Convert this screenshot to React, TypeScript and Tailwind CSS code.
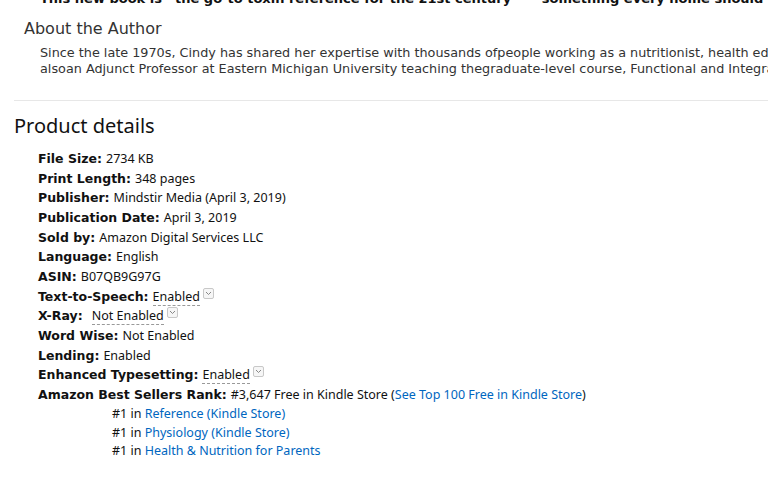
import React from "react";

const details: { label: string; value: string; dotted?: boolean; gap?: boolean }[] = [
  { label: "File Size:", value: "2734 KB" },
  { label: "Print Length:", value: "348 pages" },
  { label: "Publisher:", value: "Mindstir Media (April 3, 2019)" },
  { label: "Publication Date:", value: "April 3, 2019" },
  { label: "Sold by:", value: "Amazon Digital Services LLC" },
  { label: "Language:", value: "English" },
  { label: "ASIN:", value: "B07QB9G97G" },
  { label: "Text-to-Speech:", value: "Enabled", dotted: true },
  { label: "X-Ray:", value: "Not Enabled", dotted: true, gap: true },
  { label: "Word Wise:", value: "Not Enabled" },
  { label: "Lending:", value: "Enabled" },
  { label: "Enhanced Typesetting:", value: "Enabled", dotted: true },
];

const ranks = [
  "Reference (Kindle Store)",
  "Physiology (Kindle Store)",
  "Health & Nutrition for Parents",
];

const PopIcon = () => (
  <span className="ml-[3px] inline-flex h-[11px] w-[11px] -translate-y-[4px] items-center justify-center rounded-[2px] border border-[#c8c8c8] bg-[#f6f6f6] align-middle">
    <svg width="7" height="5" viewBox="0 0 7 5">
      <path d="M1 1 L3.5 3.5 L6 1" fill="none" stroke="#888" strokeWidth="1" />
    </svg>
  </span>
);

const App = () => {
  return (
    <div className="h-[479px] w-[768px] overflow-hidden bg-white">
      <div className="whitespace-nowrap font-['Verdana','DejaVu_Sans',sans-serif] text-[#333]">
        <p className="-mt-[10px] pl-[40px] text-[13px] font-bold leading-[18px] text-[#111]">
          This new book is “the go-to toxin reference for the 21st century” — something every home should have.
        </p>
        <h3 className="mt-[10px] pl-[24px] text-[16px] leading-[21px]">About the Author</h3>
        <div className="mt-[6px] pl-[40px] text-[12.8px] leading-[16px]">
          <p>
            Since the late 1970s, Cindy has shared her expertise with thousands ofpeople working as a nutritionist, health educator and author.
          </p>
          <p>
            alsoan Adjunct Professor at Eastern Michigan University teaching thegraduate-level course, Functional and Integrative Nutrition.
          </p>
        </div>
      </div>

      <hr className="ml-[14px] mt-[23px] border-t border-[#e7e7e7]" />

      <div className="font-['Noto_Sans','Open_Sans',sans-serif] text-[#111]">
        <h2 className="mt-[12px] pl-[14px] text-[20px] leading-[26px]">Product details</h2>
        <ul className="mt-[10px] pl-[38px] text-[12.5px] leading-[19.6px]">
          {details.map((d) => (
            <li key={d.label} className="h-[19.67px] whitespace-nowrap">
              <b className="font-['DejaVu_Sans',sans-serif] text-[12.5px] font-bold">{d.label}</b>
              <span className={d.gap ? "ml-[9px]" : "ml-[4px]"}>
                {d.dotted ? (
                  <span className="border-b border-dashed border-[#999]">{d.value}</span>
                ) : (
                  d.value
                )}
              </span>
              {d.dotted && <PopIcon />}
            </li>
          ))}
          <li className="whitespace-nowrap">
            <div className="h-[19px]">
              <b className="font-['DejaVu_Sans',sans-serif] text-[12.5px] font-bold">Amazon Best Sellers Rank:</b>
              <span className="ml-[4px]">#3,647 Free in Kindle Store (</span>
              <a className="text-[#0066c0]">See Top 100 Free in Kindle Store</a>)
            </div>
            <ul className="pl-[74px]">
              {ranks.map((r) => (
                <li key={r} className="h-[18.8px]">
                  #1 in <a className="text-[#0066c0]">{r}</a>
                </li>
              ))}
            </ul>
          </li>
        </ul>
      </div>
    </div>
  );
};

export default App;
